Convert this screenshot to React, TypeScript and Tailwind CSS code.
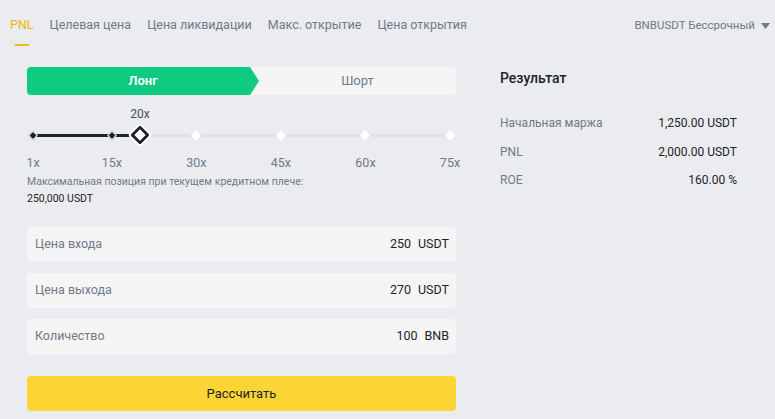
import React, { useState } from 'react';

const tabs = ['PNL', 'Целевая цена', 'Цена ликвидации', 'Макс. открытие', 'Цена открытия'];
const marks = [1, 15, 30, 45, 60, 75];

const pos = (v: number) => ((v - 1) / 74) * 100;

const App = () => {
  const [side, setSide] = useState('long');
  const lev = 20;
  return (
    <div className="min-h-screen w-[775px] h-[419px] overflow-hidden bg-[#eaecef] font-['Roboto',sans-serif] text-[#1e2329]">
      {/* tabs */}
      <div className="flex items-start justify-between pl-[10px] pr-[5px] h-[46px]">
        <div className="flex gap-4 text-[12.5px] text-[#707a8a]">
          {tabs.map((t, i) => (
            <div key={i} className="flex flex-col items-center pt-[16px]">
              <span className={i == 0 ? 'text-[#f0b90b]' : ''}>{t}</span>
              {i == 0 && <span className="mt-[9px] h-[2px] w-[14px] bg-[#f0b90b]" />}
            </div>
          ))}
        </div>
        <div className="flex items-center gap-[6px] pt-[17px] text-[11.5px] text-[#707a8a]">
          <span>BNBUSDT Бессрочный</span>
          <svg width="9" height="6" viewBox="0 0 9 6">
            <path d="M0 0h9L4.5 6z" fill="#707a8a" />
          </svg>
        </div>
      </div>

      <div className="flex pl-[27px] pt-[21px]">
        {/* left */}
        <div className="w-[429px]">
          <div className="flex h-[28px] rounded bg-[#f5f5f5] text-[13px]">
            <button
              onClick={() => setSide('long')}
              className="w-[232px] rounded-l [clip-path:polygon(0_0,calc(100%-9px)_0,100%_50%,calc(100%-9px)_100%,0_100%)] bg-[#0ecb81] font-semibold text-white"
            >
              Лонг
            </button>
            <button onClick={() => setSide('short')} className="flex-1 text-[#707a8a]">
              Шорт
            </button>
          </div>

          {/* slider */}
          <div className="relative mx-[6px] mt-[10px] h-[66px]">
            <span
              className="absolute top-0 -translate-x-1/2 text-[12px] text-[#474d57]"
              style={{ left: pos(lev) + '%' }}
            >
              {lev}x
            </span>
            <div className="absolute left-0 right-0 top-[29px] h-[3px] bg-[#dfe1e5]" />
            <div
              className="absolute left-0 top-[29px] h-[3px] bg-[#1e2329]"
              style={{ width: pos(lev) + '%' }}
            />
            {marks.map((m, i) => (
              <span
                key={i}
                className={`absolute top-[27px] h-[7px] w-[7px] -translate-x-1/2 rotate-45 border border-white ${
                  m <= lev ? 'bg-[#1e2329]' : 'bg-white'
                }`}
                style={{ left: pos(m) + '%' }}
              />
            ))}
            <span
              className="absolute top-[23px] h-[14px] w-[14px] -translate-x-1/2 rotate-45 rounded-[2px] border-[3px] border-[#1e2329] bg-white outline outline-2 outline-white"
              style={{ left: pos(lev) + '%' }}
            />
            {marks.map((m, i) => (
              <span
                key={i}
                className="absolute top-[49px] -translate-x-1/2 text-[12.5px] text-[#707a8a]"
                style={{ left: pos(m) + '%' }}
              >
                {m}x
              </span>
            ))}
          </div>

          <p className="mt-[2px] text-[10.5px] leading-[17px] text-[#707a8a]">
            Максимальная позиция при текущем кредитном плече:
          </p>
          <p className="text-[10.5px] leading-[17px] text-[#1e2329]">250,000 USDT</p>

          <div className="mt-[20px] flex flex-col gap-[11px]">
            {[
              ['Цена входа', '250', 'USDT'],
              ['Цена выхода', '270', 'USDT'],
              ['Количество', '100', 'BNB'],
            ].map((r, i) => (
              <div
                key={i}
                className="flex h-[35px] items-center justify-between rounded bg-[#f5f5f5] pl-[8px] pr-[7px] text-[12.5px]"
              >
                <span className="text-[#707a8a]">{r[0]}</span>
                <span className="flex gap-[7px] text-[#1e2329]">
                  <span>{r[1]}</span>
                  <span>{r[2]}</span>
                </span>
              </div>
            ))}
          </div>

          <button className="mt-[22px] h-[35px] w-full rounded bg-[#fcd535] text-[13px] text-[#1e2329]">
            Рассчитать
          </button>
        </div>

        {/* right */}
        <div className="ml-[44px] w-[237px] pt-[1px]">
          <h3 className="text-[14px] font-medium">Результат</h3>
          <div className="mt-[25px] flex flex-col gap-[9.5px] text-[12px]">
            {[
              ['Начальная маржа', '1,250.00 USDT'],
              ['PNL', '2,000.00 USDT'],
              ['ROE', '160.00 %'],
            ].map((r, i) => (
              <div key={i} className="flex justify-between leading-[19px]">
                <span className="text-[#707a8a]">{r[0]}</span>
                <span className="text-[#1e2329]">{r[1]}</span>
              </div>
            ))}
          </div>
        </div>
      </div>
    </div>
  );
};

export default App;
